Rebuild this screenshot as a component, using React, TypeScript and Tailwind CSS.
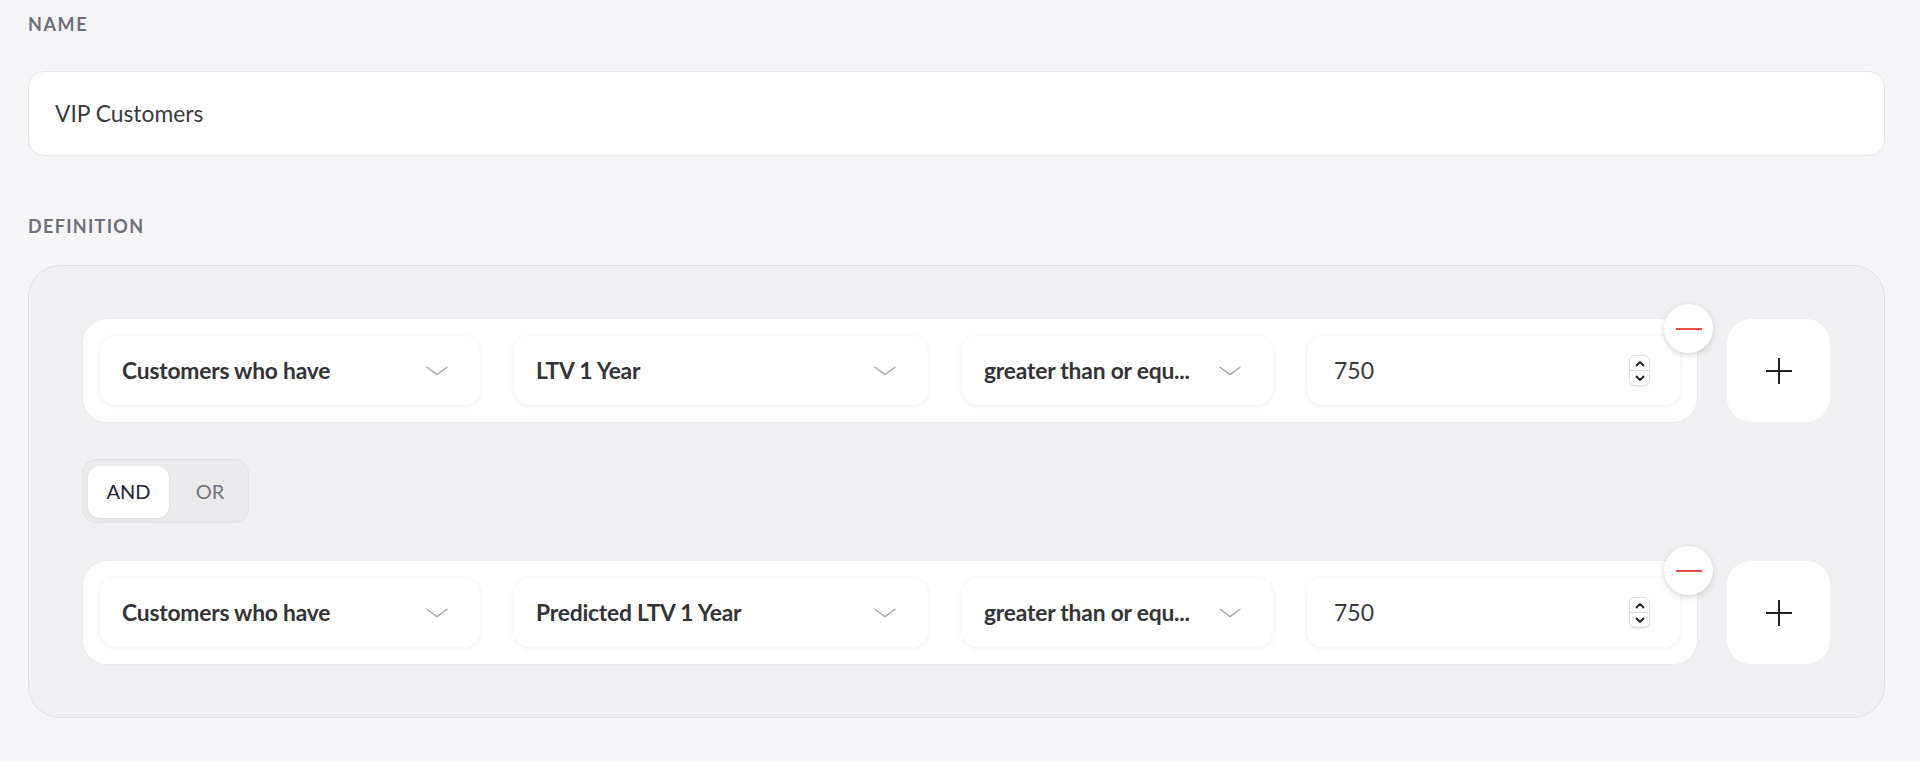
import React from "react";

const Chevron = () => (
  <svg width="22" height="10" viewBox="0 0 22 10" fill="none" className="shrink-0">
    <path d="M1 1.2 L11 8.6 L21 1.2" stroke="#a6a5b3" strokeWidth="1.4" strokeLinecap="round" strokeLinejoin="round" />
  </svg>
);

const Select = ({ label, w }: { label: string; w: string }) => (
  <div
    className={`${w} h-[69px] shrink-0 bg-white rounded-[16px] shadow-[0_1px_6px_rgba(0,0,0,0.08)] flex items-center justify-between pl-[22px] pr-[32px]`}
  >
    <span className="text-[22.8px] font-bold text-[#333338] whitespace-nowrap tracking-[-0.2px]">{label}</span>
    <Chevron />
  </div>
);

const Spinner = () => (
  <div className="w-[21px] h-[31px] rounded-[6px] border border-[#dedede] bg-white flex flex-col items-center shadow-[0_1px_2px_rgba(0,0,0,0.08)]">
    <div className="flex-1 w-full flex items-center justify-center border-b border-[#dcdcdc]">
      <svg width="10" height="7" viewBox="0 0 10 7" fill="none">
        <path d="M1.5 5.5 L5 2 L8.5 5.5" stroke="#222" strokeWidth="1.8" strokeLinecap="round" strokeLinejoin="round" />
      </svg>
    </div>
    <div className="flex-1 w-full flex items-center justify-center">
      <svg width="10" height="7" viewBox="0 0 10 7" fill="none">
        <path d="M1.5 1.5 L5 5 L8.5 1.5" stroke="#222" strokeWidth="1.8" strokeLinecap="round" strokeLinejoin="round" />
      </svg>
    </div>
  </div>
);

const Row = ({ second }: { second: string }) => (
  <div className="flex items-start gap-[30px]">
    <div className="relative w-[1614px] h-[103px] bg-white rounded-[24px] shadow-[0_0_0_1px_rgba(0,0,0,0.025)] flex items-center gap-[34px] px-[17px]">
      <Select label="Customers who have" w="w-[380px]" />
      <Select label={second} w="w-[414px]" />
      <Select label="greater than or equ..." w="w-[311px]" />
      <div className="flex-1 h-[69px] bg-white rounded-[16px] shadow-[0_1px_6px_rgba(0,0,0,0.08)] flex items-center justify-between pl-[27px] pr-[30px]">
        <span className="text-[23px] text-[#3a3a3e]">750</span>
        <Spinner />
      </div>
      <button className="absolute top-[-15px] right-[-16px] w-[49px] h-[49px] rounded-full bg-white shadow-[0_2px_6px_rgba(0,0,0,0.16)] flex items-center justify-center">
        <span className="block w-[26px] h-[2px] bg-[#ea4a45]" />
      </button>
    </div>
    <button className="w-[103px] h-[103px] shrink-0 bg-white rounded-[24px] flex items-center justify-center">
      <svg width="28" height="28" viewBox="0 0 28 28" fill="none">
        <path d="M14 1 V27 M1 14 H27" stroke="#23232f" strokeWidth="2" />
      </svg>
    </button>
  </div>
);

export default function App() {
  return (
    <div
      className="min-h-screen w-full bg-[#f6f6f8] pl-[28px] pr-[35px] pt-[12px] pb-[40px]"
      style={{ fontFamily: "Lato, 'Open Sans', sans-serif" }}
    >
      <div className="text-[18px] leading-[24px] font-bold tracking-[1.6px] text-[#6f6e7b]">NAME</div>
      <div className="mt-[35px] h-[85px] bg-white border border-[#e6e6ea] rounded-[16px] flex items-center pl-[26px]">
        <span className="text-[22.8px] text-[#3a3a3e]">VIP Customers</span>
      </div>
      <div className="mt-[58px] text-[18px] leading-[24px] font-bold tracking-[1.3px] text-[#6f6e7b]">DEFINITION</div>
      <div className="mt-[27px] bg-[#f0f0f2] border border-[#e0e0e4] rounded-[32px] p-[53px] pl-[54px]">
        <Row second="LTV 1 Year" />
        <div className="mt-[37px] mb-[38px] -ml-[1px] w-[167px] h-[64px] rounded-[14px] bg-[#eaeaed] border border-[#e2e2e6] p-[5px] pt-[6px] flex items-stretch">
          <div className="w-[81px] h-[52px] pb-[3px] bg-white rounded-[12px] shadow-[0_1px_3px_rgba(0,0,0,0.06)] flex items-center justify-center text-[20px] text-[#24233a]">
            AND
          </div>
          <div className="flex-1 h-[52px] pb-[3px] flex items-center justify-center pl-[8px] text-[20px] text-[#73727e]">OR</div>
        </div>
        <Row second="Predicted LTV 1 Year" />
      </div>
    </div>
  );
}
